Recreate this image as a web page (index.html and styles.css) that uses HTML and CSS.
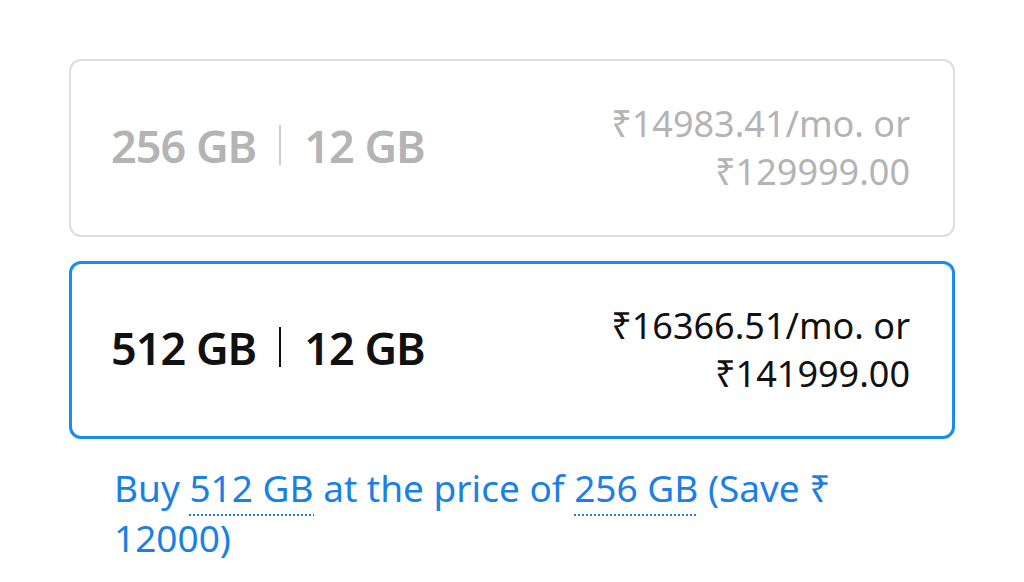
FILE: index.html
```html
<!DOCTYPE html>
<html>
<head>
<meta charset="utf-8">
<link rel="stylesheet" href="styles.css">
</head>
<body>
<div class="wrap">
  <div class="card disabled">
    <div class="spec"><span>256 GB</span><span class="sep"></span><span>12 GB</span></div>
    <div class="price">₹14983.41/mo. or<br>₹129999.00</div>
  </div>
  <div class="card selected">
    <div class="spec"><span>512 GB</span><span class="sep"></span><span>12 GB</span></div>
    <div class="price">₹16366.51/mo. or<br>₹141999.00</div>
  </div>
  <p class="offer">Buy <span class="dot">512 GB</span> at the price of <span class="dot">256 GB</span> (Save ₹ 12000)</p>
</div>
</body>
</html>
```
FILE: styles.css
```css
html, body {
  margin: 0;
  background: #fff;
}
body {
  font-family: "Noto Sans", "Open Sans", sans-serif;
}
.wrap {
  width: 886px;
  padding: 59px 0 0 69px;
  display: flex;
  flex-direction: column;
  gap: 24px;
}
.card {
  box-sizing: border-box;
  height: 178px;
  border-radius: 12px;
  display: flex;
  align-items: center;
  justify-content: space-between;
}
.disabled {
  border: 2px solid #dedede;
  color: #b4b4b4;
  padding: 0 43px 0 40px;
}
.selected {
  border: 3px solid #1a8cf0;
  color: #111;
  padding: 0 42px 0 39px;
}
.spec {
  display: flex;
  align-items: center;
  gap: 23px;
  font-size: 45px;
  font-weight: 600;
  letter-spacing: -1px;
  margin-top: -6px;
}
.sep {
  width: 2px;
  height: 40px;
  background: #111;
}
.disabled .sep { background: #cdcdcd; }
.price {
  font-size: 36px;
  line-height: 48px;
  text-align: right;
}
.offer {
  margin: 0;
  padding-left: 45px;
  font-size: 37px;
  line-height: 50px;
  color: #1a7fe6;
}
.dot {
  padding-bottom: 3px;
  background-image: linear-gradient(to right, #1a7fe6 50%, transparent 50%);
  background-size: 4px 2px;
  background-repeat: repeat-x;
  background-position: left bottom;
}
```
